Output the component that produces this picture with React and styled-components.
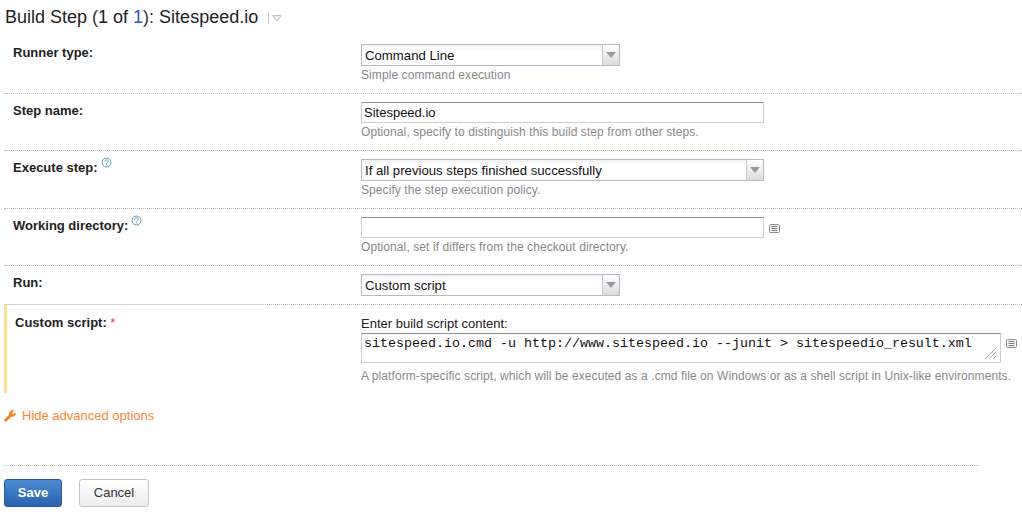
import React from 'react'
import styled, { createGlobalStyle } from 'styled-components'

const Global = createGlobalStyle`
  html, body { margin: 0; padding: 0; background: #fff; }
  body { font-family: "Liberation Sans", Arial, sans-serif; font-size: 12px; color: #222; }
`

function HelpIcon() {
  return (
    <HelpMark viewBox="0 0 11 11">
      <circle cx="5.5" cy="5.5" r="4.5" fill="none" stroke="#5b9bb5" strokeWidth="1" />
      <path d="M3.9 4.4c0-2.1 3.3-2.1 3.3-.2 0 1.2-1.6 1.2-1.6 2.4" fill="none" stroke="#5b9bb5" strokeWidth="1" />
      <rect x="5.1" y="7.4" width="1" height="1" fill="#5b9bb5" />
    </HelpMark>
  )
}

function ListIcon({ top }) {
  return (
    <ListMark viewBox="0 0 11 9" $top={top}>
      <rect x="0.5" y="0.5" width="10" height="8" rx="1" fill="#f4f4f4" stroke="#8a8a8a" />
      <path d="M2.5 2.5h6M2.5 4.5h6M2.5 6.5h6" stroke="#7d7d7d" />
    </ListMark>
  )
}

function Select({ width, value }) {
  return (
    <SelectBox $width={width}>
      <SelectValue>{value}</SelectValue>
      <SelectArrow>
        <svg width="10" height="6" viewBox="0 0 10 6">
          <path d="M0 0h10L5 6z" fill="#9a9a9a" />
        </svg>
      </SelectArrow>
    </SelectBox>
  )
}

function App() {
  return (
    <Page>
      <Global />
      <Title>
        Build Step <Paren>(</Paren>1 of <Count>1</Count><Paren>)</Paren>: Sitespeed.io
        <TitleMenu>
          <svg width="10" height="7" viewBox="0 0 10 7">
            <path d="M0.7 0.7h8.6L5 6z" fill="#fafafa" stroke="#b5b5b5" />
          </svg>
        </TitleMenu>
      </Title>

      <Row $height={58}>
        <Label>Runner type:</Label>
        <Field>
          <Select width={259} value="Command Line" />
          <Note>Simple command execution</Note>
        </Field>
      </Row>
      <Row $height={57}>
        <Label>Step name:</Label>
        <Field>
          <TextBox $width={403}>Sitespeed.io</TextBox>
          <Note>Optional, specify to distinguish this build step from other steps.</Note>
        </Field>
      </Row>
      <Row $height={58}>
        <Label>Execute step:<HelpIcon /></Label>
        <Field>
          <Select width={403} value="If all previous steps finished successfully" />
          <Note>Specify the step execution policy.</Note>
        </Field>
      </Row>
      <Row $height={57}>
        <Label>Working directory:<HelpIcon /></Label>
        <Field>
          <FieldLine>
            <TextBox $width={403} />
            <ListIcon top={7} />
          </FieldLine>
          <Note>Optional, set if differs from the checkout directory.</Note>
        </Field>
      </Row>
      <Row $height={38} $last>
        <Label>Run:</Label>
        <Field>
          <Select width={259} value="Custom script" />
        </Field>
      </Row>
      <ScriptRow>
        <Label>Custom script: <Required>*</Required></Label>
        <ScriptField>
          <ScriptCaption>Enter build script content:</ScriptCaption>
          <FieldLine>
            <ScriptArea>
              sitespeed.io.cmd -u http://www.sitespeed.io --junit &gt; sitespeedio_result.xml
              <Grip viewBox="0 0 12 12">
                <path d="M1 12L12 1M5 12l7-7M9 12l3-3" stroke="#a8a8a8" fill="none" />
              </Grip>
            </ScriptArea>
            <ListIcon top={6} />
          </FieldLine>
          <ScriptNote>A platform-specific script, which will be executed as a .cmd file on Windows or as a shell script in Unix-like environments.</ScriptNote>
        </ScriptField>
      </ScriptRow>

      <Advanced>
        <WrenchIcon viewBox="0 0 12 12">
          <path d="M11.5 3.1a3.2 3.2 0 0 1-4.2 3.1L2.6 11a1.2 1.2 0 0 1-1.7-1.7l4.8-4.6A3.2 3.2 0 0 1 9.6.5L7.8 2.3l.3 1.7 1.7.3z" fill="#f58220" stroke="#f58220" strokeWidth="0.7" />
        </WrenchIcon>
        Hide advanced options
      </Advanced>

      <Footer>
        <SaveButton>Save</SaveButton>
        <CancelButton>Cancel</CancelButton>
      </Footer>
    </Page>
  )
}

const Page = styled.div`
  width: 1022px;
  height: 517px;
  overflow: hidden;
`

const Title = styled.h2`
  margin: 0;
  padding: 7px 0 0 5px;
  height: 36px;
  box-sizing: border-box;
  font-size: 18px;
  line-height: 20px;
  font-weight: normal;
  color: #222;
  display: flex;
  white-space: pre;
`

const Paren = styled.span`
  color: #333;
`

const Count = styled.span`
  color: #2a62a8;
`

const TitleMenu = styled.span`
  margin-left: 10px;
  padding-left: 3px;
  height: 11px;
  margin-top: 6px;
  border-left: 1px solid #c4c4c4;
  display: flex;
  align-items: center;
`

const Row = styled.div`
  display: flex;
  height: ${p => p.$height}px;
  box-sizing: border-box;
  margin-left: 4px;
  padding-top: 8px;
  border-bottom: ${p => (p.$last ? 'none' : '1px dotted #bbb')};
`

const ScriptRow = styled.div`
  position: relative;
  display: flex;
  height: 89px;
  box-sizing: border-box;
  margin-left: 4px;
  padding-top: 9px;
  border-top: 1px dotted #bbb;
  border-left: 3px solid #ffe08a;

  &::before {
    content: '';
    position: absolute;
    top: -1px;
    left: -3px;
    width: 260px;
    height: 1px;
    background: #d2d2d2;
  }
`

const Label = styled.div`
  width: 357px;
  padding: 1px 0 0 9px;
  flex: none;
  font-size: 13px;
  line-height: 15px;
  font-weight: bold;
  color: #222;
  box-sizing: border-box;
  white-space: pre;
  display: flex;
  align-items: flex-start;

  ${ScriptRow} & {
    width: 354px;
    padding-left: 8px;
  }
`

const Required = styled.span`
  color: #e0405a;
  font-weight: normal;
`

const Field = styled.div`
  display: flex;
  flex-direction: column;
  align-items: flex-start;
`

const ScriptField = styled(Field)`
  margin-top: 3px;
`

const FieldLine = styled.div`
  display: flex;
  align-items: flex-start;
`

const Note = styled.div`
  margin-top: 2px;
  font-size: 12px;
  line-height: 14px;
  letter-spacing: 0.085px;
  color: #888;
  white-space: nowrap;
`

const ScriptNote = styled(Note)`
  margin-top: 6px;
`

const SelectBox = styled.div`
  width: ${p => p.$width}px;
  height: 22px;
  box-sizing: border-box;
  display: flex;
  border: 1px solid #b8b8cc;
  background: linear-gradient(#f2f2f2, #fff 5px);
`

const SelectValue = styled.div`
  flex: 1;
  padding: 1px 0 0 3px;
  font-size: 13.2px;
  line-height: 20px;
  color: #111;
`

const SelectArrow = styled.div`
  width: 16px;
  border-left: 1px solid #c8c8d4;
  background: linear-gradient(#fff, #dcdcdc);
  display: flex;
  align-items: center;
  justify-content: center;
`

const TextBox = styled.div`
  width: ${p => p.$width}px;
  height: 21px;
  box-sizing: border-box;
  border: 1px solid #cfcfcf;
  border-top-color: #8f8f8f;
  padding-left: 2px;
  font-size: 13px;
  line-height: 19px;
  color: #111;
`

const ListMark = styled.svg`
  width: 11px;
  height: 9px;
  margin: ${p => p.$top}px 0 0 5px;
`

const HelpMark = styled.svg`
  width: 11px;
  height: 11px;
  margin: -3px 0 0 3px;
`

const ScriptCaption = styled.div`
  font-size: 13px;
  line-height: 14px;
  color: #222;
  margin-bottom: 2px;
`

const ScriptArea = styled.div`
  position: relative;
  width: 640px;
  height: 30px;
  box-sizing: border-box;
  border: 1px solid #cfcfcf;
  border-top-color: #8f8f8f;
  padding: 2px 2px;
  font-family: "Liberation Mono", monospace;
  font-size: 13.33px;
  line-height: 15px;
  color: #111;
  white-space: nowrap;
`

const Grip = styled.svg`
  position: absolute;
  right: 4px;
  bottom: 3px;
  width: 12px;
  height: 12px;
`

const WrenchIcon = styled.svg`
  width: 12px;
  height: 12px;
  margin-top: 2px;
`

const Advanced = styled.div`
  margin: 15px 0 0 4px;
  height: 57px;
  display: flex;
  align-items: flex-start;
  gap: 6px;
  color: #f7882f;
  font-size: 13px;
  line-height: 15px;
`

const Footer = styled.div`
  width: 975px;
  margin-left: 4px;
  border-top: 1px dotted #bbb;
  padding-top: 13px;
  display: flex;
  gap: 17px;
`

const SaveButton = styled.div`
  width: 58px;
  height: 28px;
  box-sizing: border-box;
  border: 1px solid #2a5a9c;
  border-radius: 3px;
  background: linear-gradient(#4a8bd0, #2a62ae);
  color: #fff;
  font-size: 13px;
  font-weight: bold;
  line-height: 26px;
  text-align: center;
`

const CancelButton = styled.div`
  width: 70px;
  height: 28px;
  box-sizing: border-box;
  border: 1px solid #c4c4c4;
  border-radius: 3px;
  background: linear-gradient(#fff, #ececec);
  color: #333;
  font-size: 13px;
  line-height: 26px;
  text-align: center;
`

export default App
